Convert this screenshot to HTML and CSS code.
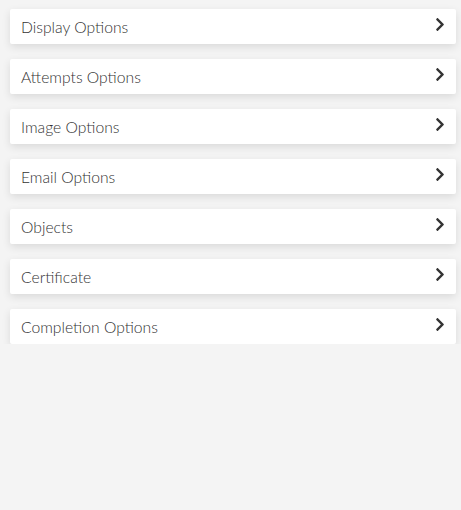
FILE: index.html
```html
<!DOCTYPE html>
<html>
<head>
<meta charset="utf-8">
<link rel="stylesheet" href="styles.css">
</head>
<body>
<div class="list">
  <div class="item"><span class="label">Display Options</span><svg class="chev" viewBox="0 0 320 512"><path d="M285.5 273L91.1 467.3c-9.4 9.4-24.6 9.4-33.9 0l-22.7-22.7c-9.4-9.4-9.4-24.5 0-33.9L188.5 256 34.5 101.3c-9.3-9.4-9.3-24.5 0-33.9l22.7-22.7c9.4-9.4 24.6-9.4 33.9 0L285.5 239c9.4 9.4 9.4 24.6 0 34z"/></svg></div>
  <div class="item"><span class="label">Attempts Options</span><svg class="chev" viewBox="0 0 320 512"><path d="M285.5 273L91.1 467.3c-9.4 9.4-24.6 9.4-33.9 0l-22.7-22.7c-9.4-9.4-9.4-24.5 0-33.9L188.5 256 34.5 101.3c-9.3-9.4-9.3-24.5 0-33.9l22.7-22.7c9.4-9.4 24.6-9.4 33.9 0L285.5 239c9.4 9.4 9.4 24.6 0 34z"/></svg></div>
  <div class="item"><span class="label">Image Options</span><svg class="chev" viewBox="0 0 320 512"><path d="M285.5 273L91.1 467.3c-9.4 9.4-24.6 9.4-33.9 0l-22.7-22.7c-9.4-9.4-9.4-24.5 0-33.9L188.5 256 34.5 101.3c-9.3-9.4-9.3-24.5 0-33.9l22.7-22.7c9.4-9.4 24.6-9.4 33.9 0L285.5 239c9.4 9.4 9.4 24.6 0 34z"/></svg></div>
  <div class="item"><span class="label">Email Options</span><svg class="chev" viewBox="0 0 320 512"><path d="M285.5 273L91.1 467.3c-9.4 9.4-24.6 9.4-33.9 0l-22.7-22.7c-9.4-9.4-9.4-24.5 0-33.9L188.5 256 34.5 101.3c-9.3-9.4-9.3-24.5 0-33.9l22.7-22.7c9.4-9.4 24.6-9.4 33.9 0L285.5 239c9.4 9.4 9.4 24.6 0 34z"/></svg></div>
  <div class="item"><span class="label">Objects</span><svg class="chev" viewBox="0 0 320 512"><path d="M285.5 273L91.1 467.3c-9.4 9.4-24.6 9.4-33.9 0l-22.7-22.7c-9.4-9.4-9.4-24.5 0-33.9L188.5 256 34.5 101.3c-9.3-9.4-9.3-24.5 0-33.9l22.7-22.7c9.4-9.4 24.6-9.4 33.9 0L285.5 239c9.4 9.4 9.4 24.6 0 34z"/></svg></div>
  <div class="item"><span class="label">Certificate</span><svg class="chev" viewBox="0 0 320 512"><path d="M285.5 273L91.1 467.3c-9.4 9.4-24.6 9.4-33.9 0l-22.7-22.7c-9.4-9.4-9.4-24.5 0-33.9L188.5 256 34.5 101.3c-9.3-9.4-9.3-24.5 0-33.9l22.7-22.7c9.4-9.4 24.6-9.4 33.9 0L285.5 239c9.4 9.4 9.4 24.6 0 34z"/></svg></div>
  <div class="item"><span class="label">Completion Options</span><svg class="chev" viewBox="0 0 320 512"><path d="M285.5 273L91.1 467.3c-9.4 9.4-24.6 9.4-33.9 0l-22.7-22.7c-9.4-9.4-9.4-24.5 0-33.9L188.5 256 34.5 101.3c-9.3-9.4-9.3-24.5 0-33.9l22.7-22.7c9.4-9.4 24.6-9.4 33.9 0L285.5 239c9.4 9.4 9.4 24.6 0 34z"/></svg></div>
</div>
</body>
</html>
```

FILE: styles.css
```css
html, body {
  margin: 0;
  padding: 0;
  background: #f4f4f4;
  font-family: Lato, "Open Sans", sans-serif;
}

.list {
  display: flex;
  flex-direction: column;
  gap: 15px;
  padding: 9px 5px 0 10px;
}

.item {
  display: flex;
  align-items: center;
  justify-content: space-between;
  height: 35px;
  padding: 0 11px;
  background: #fff;
  border-radius: 2px;
  box-shadow: 0 3px 8px rgba(0, 0, 0, 0.11);
}

.label {
  font-size: 15.7px;
  font-weight: 300;
  color: #333;
  padding-top: 1px;
}

.chev {
  width: 10px;
  height: 15px;
  fill: #333;
  margin-top: -5px;
}
```
